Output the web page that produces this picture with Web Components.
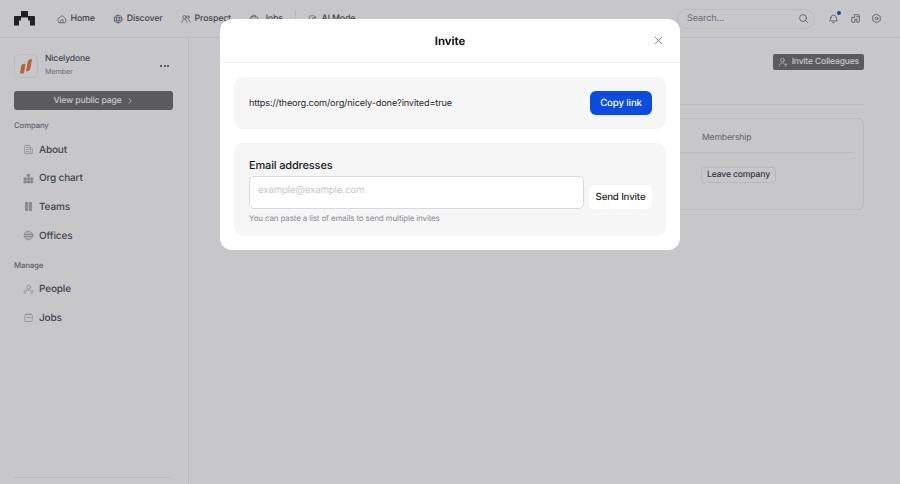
<!DOCTYPE html>
<html>
<head>
<meta charset="utf-8">
<title>Invite</title>
<style>
  html, body { margin: 0; height: 100%; overflow: hidden; }
  body { font-family: Inter, "Liberation Sans", sans-serif; color: #18181b; background: #fff; text-rendering: geometricPrecision; letter-spacing: -.15px; }
</style>
</head>
<body>
<app-page></app-page>

<script>
// small helper so each element only has to declare its styles and markup
class Base extends HTMLElement {
  constructor() {
    super();
    this.attachShadow({ mode: "open" });
    this.shadowRoot.innerHTML = `<style>${this.constructor.css}</style>${this.render()}`;
  }
  render() { return "<slot></slot>"; }
}

const stroke = 'fill="none" stroke="currentColor" stroke-linecap="round" stroke-linejoin="round"';
const icons = {
  home: `<path d="M2 7.5 8 2.5l6 5V13a1 1 0 0 1-1 1H3a1 1 0 0 1-1-1Z"/><path d="M6 14v-3a2 2 0 0 1 4 0v3"/>`,
  globe: `<circle cx="8" cy="8" r="6.2"/><path d="M2 6h12M2 10h12M8 1.8c-3.4 3.6-3.4 8.8 0 12.4M8 1.8c3.4 3.6 3.4 8.8 0 12.4"/>`,
  prospect: `<circle cx="5.5" cy="5" r="2.6"/><path d="M1.5 13.5c0-3 1.7-4.8 4-4.8s4 1.8 4 4.8"/><circle cx="11" cy="5" r="2.2"/><path d="M11.5 8.8c1.8.2 3 1.8 3 4.2"/>`,
  jobs: `<rect x="2" y="4.5" width="12" height="9.5" rx="2"/><path d="M5.5 4.5V3a1 1 0 0 1 1-1h3a1 1 0 0 1 1 1v1.5M2 8.5h12M6 8.5v1.5M10 8.5v1.5"/>`,
  ai: `<path d="M8 3H3.5A1.5 1.5 0 0 0 2 4.500V12.500A1.500 1.500 0 0 0 3.500 14H11.500A1.500 1.500 0 0 0 13 12.500V9"/><path d="M5.500 10.500C6 7.500 8 5.500 11 5.500M9.500 2.800 13 5.500 9.500 8.200"/>`,
  search: `<circle cx="7.300" cy="7.300" r="5"/><path d="m11 11 3 3"/>`,
  bell: `<path d="M4 7a4 4 0 0 1 8 0c0 3 1.500 4 1.500 4.500h-11C2.500 11 4 10 4 7Z"/><path d="M6.500 13.500a1.600 1.600 0 0 0 3 0"/>`,
  inbox: `<path d="M6 2.500H12A1.500 1.500 0 0 1 13.500 4V12A1.500 1.500 0 0 1 12 13.500H10V9H7V13.500H4A1.500 1.500 0 0 1 2.500 12V6.500H6.500V4"/><path d="M9.500 5.500H13.500"/>`,
  gear: `<path d="M8 1.800 13.400 4.900V11.100L8 14.200 2.600 11.100V4.900Z"/><circle cx="8" cy="8" r="2"/>`,
  chevron: `<path d="m6 3.500 4.500 4.500L6 12.500"/>`,
  close: `<path d="m3 3 10 10M13 3 3 13"/>`,
  invite: `<circle cx="7" cy="5" r="3"/><path d="M2 14.500c.4-3 2.200-5 5-5 1.600 0 2.800.6 3.700 1.700M12.500 10.500v4M10.500 12.500h4"/>`,
  about: `<rect x="2.500" y="2" width="8" height="12" rx="1"/><path d="M10.500 6h2a1 1 0 0 1 1 1v7h-3M5 5h3M5 8h3M5 11h3"/>`,
  org: `<rect x="6.500" y="2" width="3" height="3" fill="currentColor"/><rect x="1.800" y="7" width="3" height="3" fill="currentColor"/><rect x="6.500" y="7" width="3" height="3" fill="currentColor"/><rect x="11.200" y="7" width="3" height="3" fill="currentColor"/><rect x="1.800" y="11.500" width="3" height="3" fill="currentColor"/><rect x="6.500" y="11.500" width="3" height="3" fill="currentColor"/><rect x="11.200" y="11.500" width="3" height="3" fill="currentColor"/>`,
  teams: `<rect x="3.500" y="2" width="3.500" height="3.500" rx=".7" fill="currentColor"/><rect x="9" y="2" width="3.500" height="3.500" rx=".7" fill="currentColor"/><rect x="3.500" y="6.300" width="3.500" height="3.500" rx=".7" fill="currentColor"/><rect x="9" y="6.300" width="3.500" height="3.500" rx=".7" fill="currentColor"/><rect x="3.500" y="10.600" width="3.500" height="3.500" rx=".7" fill="currentColor"/><rect x="9" y="10.600" width="3.500" height="3.500" rx=".7" fill="currentColor"/>`,
  offices: `<circle cx="8" cy="8" r="6.300" fill="currentColor" fill-opacity=".35"/><path d="M1.800 6.500h12.400M1.800 9.500h12.400"/>`,
  people: `<circle cx="8" cy="4.800" r="2.800"/><path d="M3 14c0-3.200 2-5.300 5-5.300s5 2.100 5 5.300"/><path d="M3 8.500c-1 .6-1.600 1.800-1.600 3.200M13 8.500c1 .6 1.600 1.800 1.600 3.200"/>`,
  job2: `<rect x="2.500" y="3.500" width="11" height="10.500" rx="2"/><path d="M5.500 3.500V2M10.500 3.500V2M5.500 8h5"/>`
};

class AppIcon extends Base {
  static css = `:host { display: inline-flex; flex: none; width: var(--size, 10px); height: var(--size, 10px); }
    svg { width: 100%; height: 100%; display: block; }`;
  render() {
    return `<svg viewBox="0 0 16 16" stroke-width="${this.getAttribute("weight") || 1}" ${stroke}>${icons[this.getAttribute("name")]}</svg>`;
  }
}
customElements.define("app-icon", AppIcon);

class NavLink extends Base {
  static css = `:host { display: inline-flex; align-items: center; gap: 3.500px; font-size: 8.800px; font-weight: 500; color: #52525a; --size: 10px; }`;
  render() {
    return `<app-icon name="${this.getAttribute("icon")}"></app-icon><slot></slot>`;
  }
}
customElements.define("nav-link", NavLink);

class TopBar extends Base {
  static css = `:host { display: flex; align-items: center; height: 38px; box-sizing: border-box; border-bottom: 1px solid #f2f2f3; padding: 0 18px 0 14px; }
    .logo { width: 21px; height: 15px; margin-right: 22px; flex: none; display: block; }
    nav { display: flex; align-items: center; gap: 18.500px; }
    .sep { width: 1px; height: 18px; background: #ececee; margin: 0 -7px 0 -6px; }
    .search { display: flex; align-items: center; justify-content: space-between; box-sizing: border-box; width: 138px; height: 20px; margin-left: auto; padding: 0 5px 0 9px; border: 1px solid #f0f0f1; border-radius: 10px; font-size: 9.200px; color: #8a8a92; --size: 11px; }
    .search app-icon { color: #52525b; }
    .tools { display: flex; align-items: center; gap: 10.500px; margin-left: 13px; color: #52525a; --size: 11px; }
    .bell { position: relative; display: flex; }
    .dot { position: absolute; top: -2px; right: -2px; width: 4px; height: 4px; border-radius: 50%; background: #1d4ed8; }`;
  render() {
    return `
      <svg class="logo" viewBox="0 0 21 15" fill="#27272a"><path d="M7 0H14V5H20A1 1 0 0 1 21 6V14.500H16V9.500H14V6.500H7V9.500H5V14.500H0V6A1 1 0 0 1 1 5H7Z"/></svg>
      <nav>
        <nav-link icon="home">Home</nav-link>
        <nav-link icon="globe">Discover</nav-link>
        <nav-link icon="prospect">Prospect</nav-link>
        <nav-link icon="jobs">Jobs</nav-link>
        <span class="sep"></span>
        <nav-link icon="ai">AI Mode</nav-link>
      </nav>
      <div class="search"><span>Search...</span><app-icon name="search"></app-icon></div>
      <div class="tools">
        <span class="bell"><app-icon name="bell"></app-icon><i class="dot"></i></span>
        <app-icon name="inbox"></app-icon>
        <app-icon name="gear"></app-icon>
      </div>`;
  }
}
customElements.define("top-bar", TopBar);

class SideItem extends Base {
  static css = `:host { display: flex; align-items: center; gap: 5px; height: 28.600px; padding-left: 9px; font-size: 10px; font-weight: 500; color: #52525a; }
    app-icon { --size: 11px; color: #a4a4ac; }`;
  render() {
    return `<app-icon name="${this.getAttribute("icon")}"></app-icon><slot></slot>`;
  }
}
customElements.define("side-item", SideItem);

class SideBar extends Base {
  static css = `:host { display: flex; flex-direction: column; flex: none; width: 189px; box-sizing: border-box; height: 100%; padding: 15px 15px 6px 14px; border-right: 1px solid #f0f0f1; }
    .org { display: flex; align-items: center; gap: 7px; height: 25px; }
    .badge { display: grid; place-items: center; width: 24px; height: 24px; box-sizing: border-box; border: 1px solid #f0f0f1; border-radius: 6px; }
    .badge svg { width: 14px; height: 16px; display: block; }
    .name { font-size: 8.600px; font-weight: 500; color: #52525a; line-height: 13px; }
    .role { font-size: 7.300px; color: #8a8a92; line-height: 12px; }
    .more { margin-left: auto; margin-right: 4px; display: flex; gap: 1.500px; }
    .more i { width: 2px; height: 2px; border-radius: 50%; background: #3f3f46; }
    .view { display: flex; align-items: center; justify-content: center; gap: 4px; height: 19px; margin-top: 13px; border-radius: 3px; background: #717171; color: #fff; font-size: 8.600px; font-weight: 500; --size: 8px; }
    h4 { margin: 0; font-size: 7.800px; font-weight: 500; color: #7a7a82; line-height: 12px; }
    h4.company { margin-top: 9px; margin-bottom: 4.500px; }
    h4.manage { margin-top: 9px; margin-bottom: 4px; }
    .foot { margin-top: auto; border-top: 1px solid #f0f0f1; }`;
  render() {
    return `
      <div class="org">
        <span class="badge"><svg viewBox="0 0 14 16" fill="#ee7a45" stroke="#ee7a45" stroke-width="1" stroke-linejoin="round"><path d="M1.500 15 4.500 15 6 6 3 7Z"/><path d="M7.500 13 10.500 12 12.500 1.500 9.500 2.500Z"/></svg></span>
        <div><div class="name">Nicelydone</div><div class="role">Member</div></div>
        <span class="more"><i></i><i></i><i></i></span>
      </div>
      <div class="view">View public page <app-icon name="chevron" weight="1.500"></app-icon></div>
      <h4 class="company">Company</h4>
      <side-item icon="about">About</side-item>
      <side-item icon="org">Org chart</side-item>
      <side-item icon="teams">Teams</side-item>
      <side-item icon="offices">Offices</side-item>
      <h4 class="manage">Manage</h4>
      <side-item icon="people">People</side-item>
      <side-item icon="job2">Jobs</side-item>
      <div class="foot"></div>`;
  }
}
customElements.define("side-bar", SideBar);

class PageMain extends Base {
  static css = `:host { display: block; flex: 1; min-width: 0; padding: 16px 36px 0; }
    .actions { display: flex; justify-content: flex-end; height: 51px; border-bottom: 1px solid #f0f0f1; box-sizing: border-box; }
    .invite { display: inline-flex; align-items: center; gap: 4px; height: 16px; padding: 0 5px; border-radius: 2px; background: #717171; color: #fff; font-size: 8.500px; font-weight: 500; --size: 10px; }
    .card { margin-top: 13px; height: 92px; box-sizing: border-box; border: 1px solid #f0f0f1; border-radius: 6px; padding: 0 10px; }
    .head { display: flex; align-items: center; justify-content: flex-end; height: 34px; padding-top: 5px; box-sizing: border-box; border-bottom: 1px solid #ededee; font-size: 8.600px; color: #7a7a82; }
    .head span { width: 151px; }
    .row { display: flex; justify-content: flex-end; padding-top: 14px; }
    .cell { width: 151px; display: flex; }
    .leave { height: 16px; line-height: 15px; margin-left: -1px; padding: 0 5px; box-sizing: border-box; border: 1px solid #ededee; border-radius: 3px; font-size: 8.600px; font-weight: 500; color: #3f3f46; }`;
  render() {
    return `
      <div class="actions"><span class="invite"><app-icon name="invite"></app-icon>Invite Colleagues</span></div>
      <div class="card">
        <div class="head"><span>Membership</span></div>
        <div class="row"><div class="cell"><span class="leave">Leave company</span></div></div>
      </div>`;
  }
}
customElements.define("page-main", PageMain);

class InviteModal extends Base {
  static css = `:host { position: fixed; inset: 0; display: flex; justify-content: center; align-items: flex-start; padding-top: 19px; box-sizing: border-box; background: rgba(22, 22, 30, .24); backdrop-filter: blur(.7px); }
    .dialog { width: 460px; height: 231px; background: #fff; border-radius: 12px; overflow: hidden; filter: blur(.2px); }
    header { display: flex; align-items: center; justify-content: center; position: relative; height: 44px; box-sizing: border-box; border-bottom: 1px solid #f1f1f2; font-size: 11.500px; font-weight: 700; color: #18181b; padding-top: 1px; }
    header app-icon { position: absolute; right: 16px; top: 16px; --size: 11px; color: #52525b; }
    .body { display: flex; flex-direction: column; gap: 14px; padding: 14px; }
    .box { background: #f6f6f7; border-radius: 9px; padding: 14px 14px 12px 15px; }
    .link { display: flex; align-items: center; justify-content: space-between; height: 24px; padding-bottom: 14px; font-size: 9.200px; color: #27272a; }
    .url { padding-top: 1px; }
    .copy { display: grid; place-items: center; box-sizing: border-box; width: 62px; height: 24px; padding-top: 1px; border-radius: 6px; background: #0b4be0; color: #fff; font-size: 9.700px; font-weight: 500; }
    h3 { margin: 0; font-size: 11px; font-weight: 500; line-height: 17px; color: #18181b; }
    .fields { display: flex; align-items: flex-end; gap: 5px; margin-top: 2px; }
    .input { flex: 1; box-sizing: border-box; height: 33px; display: flex; align-items: center; padding: 0 0 5px 8px; background: #fff; border: 1.500px solid #dadadc; border-radius: 5px; font-size: 9.700px; color: #c8c8cc; }
    .send { display: grid; place-items: center; width: 63px; height: 24px; background: #fff; border-radius: 5px; font-size: 9.700px; font-weight: 500; color: #27272a; }
    .hint { margin-top: 4px; font-size: 8px; line-height: 11px; color: #8a8a92; }`;
  render() {
    return `
      <section class="dialog">
        <header>Invite<app-icon name="close"></app-icon></header>
        <div class="body">
          <div class="box link"><span class="url">https://theorg.com/org/nicely-done?invited=true</span><span class="copy">Copy link</span></div>
          <div class="box">
            <h3>Email addresses</h3>
            <div class="fields"><div class="input">example@example.com</div><div class="send">Send Invite</div></div>
            <div class="hint">You can paste a list of emails to send multiple invites</div>
          </div>
        </div>
      </section>`;
  }
}
customElements.define("invite-modal", InviteModal);

class AppPage extends Base {
  static css = `:host { display: flex; flex-direction: column; height: 100%; }
    .under { display: flex; flex: 1; min-height: 0; }`;
  render() {
    return `<top-bar></top-bar><div class="under"><side-bar></side-bar><page-main></page-main></div><invite-modal></invite-modal>`;
  }
}
customElements.define("app-page", AppPage);
</script>
</body>
</html>
